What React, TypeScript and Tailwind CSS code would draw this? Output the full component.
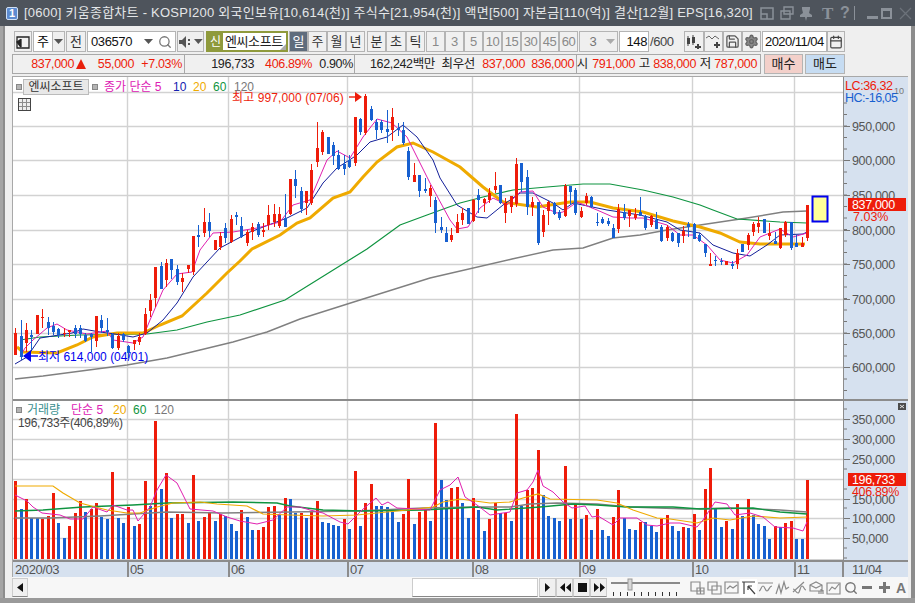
import { ReactNode } from "react";
import { Calendar, Save, Search, Settings } from "lucide-react";

const RED = "#ee1c0a";
const BLUE = "#1760d0";
const candleX = (i: number) => Math.round(15.3 + i * 5.385);

// top, bottom, high, low, colour (pixel coords, read off the screen)
const candles: [number, number, number, number, "r" | "b"][] = [
  [333,355,328,355,"r"],[336,357,320,360,"b"],[330,343,323,352,"r"],[335,337,330,350,"b"],[315,334,315,334,"r"],
  [317,318,309,328,"r"],[322,328,317,335,"b"],[326,332,322,335,"b"],[329,335,328,338,"b"],[333,334,328,337,"r"],
  [330,332,330,337,"r"],[328,334,325,338,"b"],[328,334,325,338,"b"],[335,341,333,342,"b"],[334,337,333,352,"b"],
  [316,341,316,347,"r"],[320,328,315,333,"b"],[330,332,318,336,"b"],[334,348,333,349,"b"],[336,348,333,350,"r"],
  [334,340,333,342,"b"],[346,353,345,358,"b"],[340,344,340,350,"r"],[337,342,333,345,"r"],[314,334,308,335,"r"],
  [300,311,294,317,"r"],[267,298,267,307,"r"],[266,289,262,289,"b"],[263,280,259,287,"r"],[259,270,259,279,"b"],
  [269,282,265,285,"b"],[278,282,273,292,"r"],[265,269,265,273,"r"],[236,272,236,275,"r"],[235,237,225,247,"b"],
  [222,233,208,237,"r"],[222,231,213,237,"b"],[240,250,240,250,"r"],[236,247,232,250,"r"],[228,238,223,243,"b"],
  [219,242,215,243,"r"],[215,217,212,225,"b"],[226,237,217,238,"b"],[232,243,230,246,"r"],[227,232,223,240,"r"],
  [224,235,222,237,"b"],[230,232,223,237,"r"],[215,225,205,230,"r"],[214,222,204,227,"r"],[214,226,207,228,"r"],
  [218,227,194,227,"b"],[179,214,179,215,"r"],[179,186,170,198,"b"],[191,209,187,213,"b"],[191,203,191,215,"r"],
  [170,203,164,205,"r"],[148,162,122,167,"r"],[132,152,130,155,"r"],[137,154,137,154,"b"],[145,156,142,165,"b"],
  [155,169,150,170,"b"],[164,169,155,175,"b"],[160,167,155,168,"b"],[117,163,117,166,"r"],[119,132,118,135,"b"],
  [96,133,94,135,"r"],[109,120,106,121,"b"],[122,130,119,139,"b"],[122,130,120,133,"b"],[129,132,110,143,"b"],
  [117,130,108,141,"r"],[128,130,123,136,"b"],[130,143,122,145,"b"],[151,177,147,180,"b"],[175,182,163,182,"r"],
  [175,191,175,197,"b"],[189,191,178,193,"b"],[188,196,185,207,"r"],[200,223,197,233,"b"],[227,230,217,233,"b"],
  [233,242,227,242,"b"],[235,240,228,242,"r"],[222,233,214,233,"r"],[213,220,208,225,"r"],[208,224,208,224,"b"],
  [200,221,199,222,"r"],[195,200,189,213,"b"],[199,203,198,212,"r"],[193,200,188,203,"r"],[186,190,172,193,"r"],
  [185,203,185,204,"b"],[203,213,198,223,"r"],[196,207,196,213,"r"],[164,204,158,207,"r"],[163,182,163,192,"b"],
  [177,207,170,215,"b"],[202,207,197,216,"r"],[202,243,202,245,"b"],[215,232,210,237,"r"],[202,211,201,225,"r"],
  [203,214,202,215,"b"],[212,218,210,220,"b"],[186,216,184,217,"r"],[186,192,186,205,"b"],[190,213,188,215,"b"],
  [211,217,207,218,"r"],[196,203,193,205,"r"],[197,207,196,208,"b"],[222,223,213,226,"b"],[219,223,217,224,"b"],
  [221,224,218,226,"b"],[228,238,224,238,"b"],[209,229,204,233,"r"],[212,218,204,220,"b"],[210,216,210,227,"r"],
  [214,218,208,220,"r"],[212,216,197,216,"b"],[216,228,215,230,"b"],[216,225,215,227,"r"],[220,229,212,229,"b"],
  [227,241,225,242,"b"],[227,238,225,241,"r"],[233,241,232,242,"b"],[233,243,233,247,"b"],[231,236,226,243,"r"],
  [224,227,222,237,"b"],[224,239,223,239,"b"],[235,241,233,242,"b"],[244,253,244,257,"b"],[264,266,253,266,"r"],
  [260,261,256,266,"b"],[261,262,258,265,"b"],[261,265,261,265,"r"],[264,266,261,269,"b"],[253,264,249,269,"r"],
  [244,252,244,252,"b"],[235,245,233,250,"r"],[224,232,222,236,"r"],[223,227,217,233,"r"],[219,233,219,233,"b"],
  [233,236,223,240,"r"],[241,244,232,244,"b"],[228,248,228,249,"r"],[222,235,221,237,"r"],[222,248,222,250,"b"],
  [243,247,235,247,"b"],[243,247,237,247,"r"],[205,238,205,241,"r"],
];

const volumes: [number, "r" | "b"][] = [
  [481,"r"],[509,"b"],[499,"r"],[518,"b"],[518,"b"],[519,"r"],[516,"r"],[493,"r"],[523,"b"],[538,"b"],
  [526,"r"],[513,"r"],[501,"r"],[512,"b"],[509,"r"],[503,"r"],[517,"b"],[519,"b"],[472,"r"],[518,"b"],
  [523,"b"],[507,"r"],[526,"b"],[524,"r"],[481,"r"],[506,"b"],[421,"r"],[489,"b"],[473,"r"],[518,"b"],
  [514,"r"],[514,"r"],[523,"b"],[475,"r"],[521,"b"],[517,"r"],[513,"r"],[521,"b"],[514,"r"],[516,"b"],
  [524,"b"],[531,"b"],[510,"r"],[517,"b"],[530,"b"],[530,"r"],[527,"r"],[507,"r"],[506,"r"],[515,"b"],
  [498,"r"],[499,"b"],[513,"b"],[513,"r"],[518,"b"],[512,"r"],[501,"r"],[522,"b"],[523,"b"],[525,"b"],
  [526,"b"],[519,"r"],[529,"b"],[471,"r"],[526,"b"],[503,"r"],[484,"r"],[506,"b"],[506,"b"],[507,"b"],
  [512,"b"],[522,"b"],[514,"r"],[479,"r"],[524,"b"],[512,"r"],[510,"r"],[521,"b"],[423,"r"],[480,"b"],
  [500,"b"],[488,"r"],[487,"r"],[503,"b"],[518,"b"],[498,"r"],[510,"b"],[531,"b"],[519,"r"],[503,"r"],
  [513,"b"],[513,"r"],[521,"b"],[414,"r"],[506,"b"],[490,"r"],[488,"r"],[450,"r"],[495,"b"],[516,"b"],
  [518,"b"],[521,"b"],[466,"r"],[519,"b"],[505,"r"],[519,"b"],[515,"r"],[530,"b"],[509,"r"],[530,"b"],
  [536,"b"],[517,"r"],[490,"r"],[518,"b"],[529,"b"],[530,"b"],[522,"r"],[522,"b"],[526,"b"],[532,"b"],
  [519,"r"],[515,"r"],[526,"b"],[531,"b"],[527,"r"],[528,"b"],[514,"r"],[530,"b"],[489,"r"],[468,"r"],
  [509,"b"],[527,"b"],[521,"r"],[529,"b"],[504,"r"],[516,"b"],[499,"r"],[515,"b"],[524,"b"],[526,"b"],
  [539,"b"],[526,"r"],[527,"b"],[523,"r"],[521,"r"],[539,"b"],[539,"b"],[480,"r"],
];

const ma5 = "20,357 25,348 33,340 47,328 57,324 67,330 87,334 107,331 113,340 133,343 143,337 150,320 163,290 177,274 192,272 200,250 213,233 233,232 257,228 280,222 293,205 310,200 327,160 337,151 350,158 363,137 377,119 392,123 407,137 430,183 450,220 457,229 468,227 480,208 493,198 507,205 520,192 533,191 543,207 557,213 563,212 577,202 597,210 613,217 630,218 643,218 667,225 680,235 693,235 707,245 720,260 733,263 747,255 760,237 780,229 793,237 807,233";
const ma10 = "15,364 27,357 40,338 72,333 83,329 100,332 115,334 133,337 147,333 163,320 177,303 193,277 220,248 250,232 287,218 307,208 323,183 337,168 357,155 370,142 387,137 403,125 417,137 433,160 440,178 457,205 477,217 487,218 503,205 520,193 533,193 553,203 563,210 573,203 607,210 640,215 667,222 680,230 700,233 713,245 733,253 750,256 767,245 780,235 803,234 807,232";
const ma20 = "17,347 23,352 57,353 77,345 93,337 117,333 143,333 160,325 182,316 207,293 227,273 240,261 252,249 280,235 297,223 310,218 333,198 350,192 363,177 377,162 397,147 413,143 433,152 460,167 483,187 503,202 537,207 570,202 590,202 613,208 643,212 673,221 700,227 720,233 740,242 760,244 805,244";
const ma60 = "20,340 40,337 80,335 147,334 177,330 207,322 240,315 285,300 330,272 367,249 400,225 427,215 460,203 483,197 513,190 547,187 583,184 610,184 643,190 673,197 700,205 713,210 737,219 780,222 807,223";
const ma120 = "15,379 43,376 127,365 167,358 200,350 233,342 267,332 300,319 360,300 430,278 512,259 553,250 583,248 613,238 640,235 667,230 700,225 747,218 783,212 807,211";

const vMa5 = "15,495 27,501 33,507 42,513 60,515 70,519 83,519 93,507 107,512 113,505 127,510 133,510 138,521 150,507 157,490 166,475 177,483 190,509 213,511 227,517 240,521 257,524 273,520 287,507 300,507 310,510 323,513 340,522 348,524 362,510 376,498 382,505 388,502 397,508 417,509 430,510 440,490 450,485 458,477 465,497 477,505 490,515 503,513 510,512 517,493 527,490 533,482 538,470 543,486 553,492 563,502 572,508 585,506 592,517 598,516 613,525 620,518 637,518 647,525 657,526 670,523 680,523 697,527 703,520 715,502 727,504 735,515 750,513 763,517 775,527 793,528 803,531 807,522";
const vMa20 = "15,486 53,486 63,493 80,503 107,510 127,513 140,513 157,507 173,503 200,502 217,504 247,506 263,514 290,515 323,516 357,515 407,510 433,507 443,502 460,499 490,503 510,502 523,498 538,494 550,499 597,500 617,503 633,510 657,518 670,519 697,523 713,518 730,520 753,516 780,518 807,517";
const vMa60 = "15,511 43,510 83,507 133,505 167,503 233,502 277,503 290,506 323,510 363,511 423,510 477,507 497,510 540,507 573,504 597,505 627,507 673,507 700,509 753,508 780,512 807,514";
const vMa120 = "15,518 50,518 100,516 133,514 167,512 223,513 290,512 357,511 423,508 473,507 510,507 530,504 557,503 597,504 630,507 687,509 730,508 780,510 807,512";

const verticals = [127, 228, 347, 472, 579, 692, 794];
const priceLines = [92, 126, 160, 195, 230, 264, 299, 333, 367];
const volumeLines = [419, 439, 459, 479, 499, 518, 538];

function Btn({ w, children, dim, active }: { w: number; children: ReactNode; dim?: boolean; active?: boolean }) {
  return (
    <div
      style={{ width: w }}
      className={`h-[21px] shrink-0 flex items-center justify-center border border-[#b4b4b4] text-[13px] ${
        active ? "bg-[#5f6c7c] text-white" : dim ? "bg-[#f0f0f0] text-[#8a8a8a]" : "bg-[#f0f0f0] text-[#333]"
      }`}
    >
      {children}
    </div>
  );
}

function Caret({ color = "#555" }: { color?: string }) {
  return (
    <svg width="9" height="5" viewBox="0 0 9 5">
      <path d="M0 0h9L4.5 5z" fill={color} />
    </svg>
  );
}

function TitleIcons() {
  return (
    <div className="flex items-center ml-auto pr-[3px] text-[#8b9199]">
      <svg width="14" height="14" viewBox="0 0 14 14" fill="none" stroke="currentColor" strokeWidth="1.5" className="mr-[6px]">
        <path d="M1 2h12v11H1zM1 8h6v5" />
      </svg>
      <svg width="14" height="14" viewBox="0 0 14 14" fill="none" stroke="currentColor" strokeWidth="1.4" className="mr-[5px]">
        <path d="M4 1h9v7H4zM1 5h9v8H1z" />
      </svg>
      <svg width="14" height="15" viewBox="0 0 14 15" fill="currentColor" className="mr-[9px]">
        <path d="M3 1h8v2L10 7l3 2v2H8l-1 4-1-4H1V9l3-2L3 3z" />
      </svg>
      <span className="w-[13px] font-['Liberation_Serif',serif] font-bold text-[17px] leading-none mr-[5px]">T</span>
      <span className="w-[11px] font-bold text-[16px] leading-none mr-[3px]">?</span>
      <div className="w-px h-[14px] bg-[#8b9199] mr-[12px]" />
      <div className="w-[11px] h-[3px] bg-[#8b9199] mt-[9px] mr-[3px]" />
      <div className="w-[11px] h-[11px] border-2 border-t-[3px] border-[#8b9199] mr-[7px]" />
      <svg width="13" height="13" viewBox="0 0 13 13" stroke="#6c727a" strokeWidth="1.3">
        <path d="M1 1l11 11M12 1L1 12" />
      </svg>
    </div>
  );
}

function ToolbarOne() {
  return (
    <div className="h-[28px] flex items-center pl-[2px] pt-[3px]">
      <Btn w={18}>
        <svg width="14" height="14" viewBox="0 0 14 14" fill="none" stroke="#222" strokeWidth="1.3">
          <path d="M1 2h12v11H1z" />
          <path d="M5 4v8M1 7l3-2v6z" fill="#222" />
        </svg>
      </Btn>
      <div className="flex ml-px">
        <div className="w-[20px] h-[21px] bg-white border border-[#b4b4b4] flex items-center justify-center text-[13px]">주</div>
        <div className="w-[12px] h-[21px] border border-l-0 border-[#b4b4b4] flex items-center justify-center"><Caret /></div>
      </div>
      <div className="ml-[1px]"><Btn w={20}>전</Btn></div>
      <div className="ml-px flex w-[89px] h-[21px] border border-[#b4b4b4] bg-white items-center">
        <span className="w-[53px] pl-[3px] text-[13px] text-[#111] tracking-[-0.4px]">036570</span>
        <div className="w-[14px] flex justify-center"><Caret /></div>
        <div className="w-[20px] flex justify-center"><Search size={14} color="#777" strokeWidth={2.2} /></div>
      </div>
      <div className="ml-px flex items-center w-[27px] h-[21px] border border-[#b4b4b4]">
        <div className="w-[17px] flex justify-center">
          <svg width="14" height="12" viewBox="0 0 14 12" fill="#555">
            <path d="M0 4h3l4-4v12L3 8H0z" />
            <rect x="9" y="3" width="2" height="2" />
            <rect x="9" y="7" width="2" height="2" />
          </svg>
        </div>
        <Caret />
      </div>
      <div className="ml-[2px] w-[82px] h-[21px] border-2 border-[#8f9a3c] bg-white flex items-center relative">
        <span className="w-[15px] h-full bg-[#8f9a3c] text-white text-[12px] flex items-center justify-center">신</span>
        <span className="pl-[2px] text-[13px] text-[#222] whitespace-nowrap tracking-[-0.4px]">엔씨소프트</span>
        <div className="absolute right-0 bottom-0 w-0 h-0 border-l-[6px] border-l-transparent border-b-[6px] border-b-[#aaa]" />
      </div>
      <div className="flex ml-px">
        <Btn w={19} active>일</Btn>
        <Btn w={19}>주</Btn>
        <Btn w={19}>월</Btn>
        <Btn w={19}>년</Btn>
      </div>
      <div className="flex ml-[2px]">
        <Btn w={19}>분</Btn>
        <Btn w={20}>초</Btn>
        <Btn w={19}>틱</Btn>
      </div>
      <div className="flex ml-[1px] tracking-[-0.4px]">
        {["1", "3", "5", "10", "15", "30", "45", "60"].map((n) => (
          <Btn key={n} w={19} dim>{n}</Btn>
        ))}
      </div>
      <div className="ml-px flex w-[39px] h-[21px] border border-[#b4b4b4] text-[13px] text-[#777] items-center">
        <span className="w-[26px] text-center">3</span>
        <Caret color="#aaa" />
      </div>
      <div className="ml-px w-[30px] h-[21px] border border-[#b4b4b4] bg-white text-right pr-px text-[13px] leading-[19px] text-[#111] tracking-[-0.4px]">148</div>
      <span className="ml-px w-[34px] text-[13px] text-[#444] tracking-[-0.4px]">/600</span>
      <Btn w={20}>
        <svg width="16" height="14" viewBox="0 0 16 14" fill="#444">
          <rect x="1" y="3" width="3" height="6" /><rect x="6" y="2" width="3" height="6" />
          <path d="M2 1v10M7 0v10" stroke="#444" />
          <path d="M11 9h2v2h2v2h-2v1h-2v-1H9v-2h2z" />
        </svg>
      </Btn>
      <Btn w={19}>
        <svg width="16" height="14" viewBox="0 0 16 14" fill="none" stroke="#666">
          <path d="M0 3l3-2 3 3 3-3 4 3" />
          <path d="M11 7v6M8 10h6" strokeWidth="2" stroke="#444" />
        </svg>
      </Btn>
      <Btn w={19}><Save size={15} color="#555" strokeWidth={2} /></Btn>
      <Btn w={19}><Settings size={15} color="#666" fill="#888" strokeWidth={2.2} /></Btn>
      <div className="ml-px w-[65px] h-[21px] border border-[#b4b4b4] bg-white text-[13px] leading-[19px] text-[#111] pl-[2px] tracking-[-0.55px] whitespace-nowrap">2020/11/04</div>
      <Btn w={18}><Calendar size={14} color="#444" /></Btn>
    </div>
  );
}

function Cell({ right, color = "#222", children }: { right: number; color?: string; children: ReactNode }) {
  // right-aligned to a fixed x inside its box, as the quote strip lines its numbers up
  return (
    <span className="absolute top-0 text-[12.5px] leading-[18px] whitespace-nowrap tracking-[-0.35px]" style={{ right, color }}>
      {children}
    </span>
  );
}

function ToolbarTwo() {
  return (
    <div className="h-[22px] flex items-stretch text-[13px]">
      <div className="relative w-[173px] h-[20px] border border-[#a8a8a8] bg-[#f0f0f0]">
        <Cell right={110} color={RED}>837,000</Cell>
        <span className="absolute left-[63px] top-[4px] w-0 h-0 border-x-[5px] border-x-transparent border-b-[10px] border-b-[#e8200c]" />
        <Cell right={50} color={RED}>55,000</Cell>
        <Cell right={2} color={RED}>+7.03%</Cell>
      </div>
      <div className="relative w-[170px] h-[20px] border border-l-0 border-[#a8a8a8] bg-[#f0f0f0]">
        <Cell right={100}>196,733</Cell>
        <Cell right={42} color={RED}>406.89%</Cell>
        <Cell right={1}>0.90%</Cell>
      </div>
      <div className="relative w-[222px] h-[20px] border border-l-0 border-[#a8a8a8] bg-[#f0f0f0]">
        <Cell right={141}>162,242백만</Cell>
        <Cell right={101}>최우선</Cell>
        <Cell right={51} color={RED}>837,000</Cell>
        <Cell right={2} color={RED}>836,000</Cell>
      </div>
      <div className="relative w-[184px] h-[20px] border border-l-0 border-[#a8a8a8] bg-[#f0f0f0]">
        <Cell right={172}>시</Cell>
        <Cell right={125} color={RED}>791,000</Cell>
        <Cell right={110}>고</Cell>
        <Cell right={64} color={RED}>838,000</Cell>
        <Cell right={49}>저</Cell>
        <Cell right={3} color={RED}>787,000</Cell>
      </div>
      <div className="ml-[3px] w-[39px] h-[20px] border border-[#b4b4b4] bg-[#f3d0ca] text-center leading-[18px] text-[#222]">매수</div>
      <div className="ml-[2px] w-[40px] h-[20px] border border-[#b4b4b4] bg-[#c6dcf2] text-center leading-[18px] text-[#222]">매도</div>
    </div>
  );
}

function GridV({ y1, y2 }: { y1: number; y2: number }) {
  return (
    <>
      {verticals.map((x) => (
        <line key={x} x1={x + 0.5} x2={x + 0.5} y1={y1} y2={y2} stroke="#d2d2d2" strokeWidth="1.4" />
      ))}
    </>
  );
}

function PricePlot() {
  return (
    <svg width="830" height="322" viewBox="13 77 830 322" className="absolute inset-0">
      {priceLines.map((y) => (
        <line key={y} x1="13" x2="843" y1={y + 0.5} y2={y + 0.5} stroke="#d2d2d2" strokeWidth="1.4" />
      ))}
      <GridV y1={77} y2={399} />
      <polyline points={ma120} fill="none" stroke="#808080" strokeWidth="1.4" />
      <polyline points={ma60} fill="none" stroke="#0f9440" strokeWidth="1.2" />
      <polyline points={ma20} fill="none" stroke="#efaa00" strokeWidth="3" />
      <polyline points={ma10} fill="none" stroke="#14209a" strokeWidth="1" />
      <polyline points={ma5} fill="none" stroke="#e020b0" strokeWidth="1" />
      {candles.map(([top, bottom, high, low, c], i) => {
        const x = candleX(i);
        const fill = c === "r" ? RED : BLUE;
        return (
          <g key={i} fill={fill} shapeRendering="crispEdges">
            <rect x={x} y={high} width="1" height={Math.max(low - high, 1)} />
            <rect x={x - 1} y={top} width="3" height={Math.max(bottom - top, 1)} />
          </g>
        );
      })}
      <rect x="812.5" y="196.5" width="15" height="25" fill="#ffff99" stroke="#0000ee" strokeWidth="2" />
      <path d="M349 97h6" stroke={RED} strokeWidth="1.4" />
      <path d="M355 92l7 5-7 5z" fill={RED} />
      <path d="M30 356h8" stroke="#0000ee" strokeWidth="1.4" />
      <path d="M31 350l-8 6 8 6z" fill="#0000ee" />
    </svg>
  );
}

function PriceAxis() {
  const labels: [string, number][] = [
    ["950,000", 126], ["900,000", 160], ["850,000", 195], ["800,000", 230],
    ["750,000", 264], ["700,000", 299], ["650,000", 333], ["600,000", 367],
  ];
  const minor = Array.from({ length: 28 }, (_, i) => 103 + i * 11.5);
  return (
    <svg width="64" height="322" viewBox="843 77 64 322" className="absolute inset-0">
      {minor.map((y) => <line key={y} x1="843" x2="846" y1={y} y2={y} stroke="#777" />)}
      {labels.map(([t, y]) => (
        <g key={t}>
          <line x1="843" x2="849" y1={y + 0.5} y2={y + 0.5} stroke="#777" />
          <text x="851" y={y + 5} fontSize="12.5" fill="#555" letterSpacing="-0.35">{t}</text>
        </g>
      ))}
      <text x="844" y="90" fontSize="12.5" fill="#ee1c0a" letterSpacing="-0.4">LC:36,32</text>
      <text x="893" y="94" fontSize="9" fill="#777">10</text>
      <text x="844" y="102" fontSize="12.5" fill="#1760d0" letterSpacing="-0.5">HC:-16,05</text>
      <rect x="847" y="198" width="58" height="13" fill={RED} />
      <text x="851" y="209" fontSize="12.5" fill="#fff" letterSpacing="-0.35">837,000</text>
      <text x="852" y="221" fontSize="12.5" fill={RED}>7.03%</text>
    </svg>
  );
}

function VolumePlot() {
  return (
    <svg width="830" height="159" viewBox="13 401 830 159" className="absolute inset-0">
      {volumeLines.map((y) => (
        <line key={y} x1="13" x2="843" y1={y + 0.5} y2={y + 0.5} stroke="#d2d2d2" strokeWidth="1.4" />
      ))}
      <line x1="13" x2="843" y1="559.5" y2="559.5" stroke="#d2d2d2" />
      <GridV y1={401} y2={560} />
      {volumes.map(([top, c], i) => (
        <rect key={i} x={candleX(i) - 1} y={top} width="3" height={559 - top} fill={c === "r" ? RED : BLUE} shapeRendering="crispEdges" />
      ))}
      <polyline points={vMa120} fill="none" stroke="#808080" strokeWidth="1.4" />
      <polyline points={vMa60} fill="none" stroke="#0f9440" strokeWidth="1.4" />
      <polyline points={vMa20} fill="none" stroke="#efaa00" strokeWidth="1.2" />
      <polyline points={vMa5} fill="none" stroke="#e020b0" strokeWidth="1" />
    </svg>
  );
}

function VolumeAxis() {
  const labels: [string, number][] = [
    ["350,000", 419], ["300,000", 439], ["250,000", 459], ["150,000", 499], ["100,000", 518], ["50,000", 538],
  ];
  const minor = [409, 429, 449, 469, 489, 508, 528, 548, 558];
  return (
    <svg width="64" height="159" viewBox="843 401 64 159" className="absolute inset-0">
      {minor.map((y) => <line key={y} x1="843" x2="846" y1={y} y2={y} stroke="#777" />)}
      {labels.map(([t, y]) => (
        <g key={t}>
          <line x1="843" x2="849" y1={y + 0.5} y2={y + 0.5} stroke="#777" />
          <text x="851" y={y + 5} fontSize="12.5" fill="#555" letterSpacing="-0.35">{t}</text>
        </g>
      ))}
      <rect x="847" y="473" width="58" height="13" fill={RED} />
      <text x="851" y="484" fontSize="12.5" fill="#fff" letterSpacing="-0.35">196,733</text>
      <text x="851" y="496" fontSize="12.5" fill={RED} letterSpacing="-0.35">406.89%</text>
      <rect x="897" y="403" width="8" height="7" fill="#4c4c4c" />
      <path d="M899 405l4 3M903 405l-4 3" stroke="#fff" strokeWidth="0.8" />
    </svg>
  );
}

function XAxis() {
  const ticks: [string, number][] = [
    ["05", 101], ["06", 119], ["07", 125], ["08", 107], ["09", 113], ["10", 102], ["11", 48],
  ];
  return (
    <div className="h-[17px] shrink-0 flex bg-[#d6e1ef] border-t-2 border-[#8c8c8c] text-[13px] text-[#555] leading-[16px]">
      <div className="w-[114px] pl-[2px] tracking-[-0.4px]">2020/03</div>
      {ticks.map(([t, w]) => (
        <div key={t} style={{ width: w }} className="border-l-2 border-[#8c8c8c] pl-[1px] tracking-[-0.4px]">{t}</div>
      ))}
      <div className="flex-1 border-l-2 border-[#8c8c8c] pl-[8px] tracking-[-0.4px]">11/04</div>
    </div>
  );
}

function SmallIcon({ d, active }: { d: string; active?: boolean }) {
  return (
    <div className={`w-[17px] h-[18px] flex items-center justify-center ${active ? "bg-white" : ""}`}>
      <svg width="15" height="15" viewBox="0 0 15 15" fill="none" stroke={active ? "#444" : "#8a8a8a"} strokeWidth="1.2">
        <path d={d} />
      </svg>
    </div>
  );
}

function BottomBar() {
  return (
    <div className="h-[21px] shrink-0 flex items-center bg-[#f7f7f7] text-[#111]">
      <div className="w-[16px] h-[19px] bg-[#f0f0f0] border border-[#ccc] border-b-[#888] flex items-center justify-center">
        <svg width="6" height="9" viewBox="0 0 6 9"><path d="M6 0v9L0 4.5z" fill="#111" /></svg>
      </div>
      <div className="w-[384px]" />
      <div className="w-[126px] h-[19px] bg-white border border-[#ccc] border-b-[#888]" />
      <div className="flex ml-px">
        {[
          "M3 0v9l5-4.5z",
          "M6 0v9L1 4.5zM12 0v9L7 4.5z",
          "M2 0h9v9H2z",
          "M1 0v9l5-4.5zM7 0v9l5-4.5z",
        ].map((d) => (
          <div key={d} className="w-[17px] h-[19px] bg-[#f0f0f0] border border-[#ccc] border-b-[#888] flex items-center justify-center">
            <svg width="12" height="9" viewBox="0 0 12 9"><path d={d} fill="#111" /></svg>
          </div>
        ))}
      </div>
      <svg width="72" height="19" viewBox="0 0 72 19" className="ml-[4px] shrink-0">
        <rect x="0" y="4" width="69" height="2" fill="#8a8a8a" />
        <rect x="17" y="1" width="4" height="11" fill="#d8d8d8" stroke="#999" />
        {[0, 7, 14, 21, 28, 35, 42, 49, 56, 63].map((x) => (
          <rect key={x} x={x + 2} y="14" width="1" height="4" fill="#333" />
        ))}
      </svg>
      <div className="ml-[6px] flex items-center">
        <SmallIcon d="M1 2h9v9H1zM7 8h7v6H7zM10.500 8v6M7 11h7" />
        <SmallIcon d="M1 2h9v8H1zM5 6h9v8H5z" />
        <SmallIcon d="M1 2h13v11H1zM3 9l3-3 3 2 4-3" />
        <SmallIcon active d="M1 2h13M3 14V2M7 6l7 8M7 6v4M7 6h4" />
        <SmallIcon d="M0 3h15M1 11c2 0 2-5 4-5s2 5 4 5 2-5 5-5" />
        <SmallIcon d="M1 14l3-9 2 8 3-11 2 7 3-2" />
        <SmallIcon d="M1 12L12 2M1 9c2 0 3 4 5 4s2-7 4-7 2 4 4 4" />
        <SmallIcon d="M1 5l6-3 6 3v6H1zM1 5l6 3 6-3M10 11v3M12 9v5M14 10v4" />
        <SmallIcon d="M1 14V3h13v11zM3 11l3-4 3 2 4-5" />
        <div className="ml-[1px] w-[15px] flex justify-center"><Search size={14} color="#777" strokeWidth={2.4} /></div>
        <div className="ml-[4px] w-[10px] h-[3px] bg-[#777]" />
        <div className="ml-[7px] w-[11px] h-[11px] relative">
          <div className="absolute left-0 right-0 top-[4px] h-[3px] bg-[#777]" />
          <div className="absolute top-0 bottom-0 left-[4px] w-[3px] bg-[#777]" />
        </div>
        <span className="ml-[6px] font-bold text-[14px] text-[#777] leading-none">A</span>
      </div>
    </div>
  );
}

export default function App() {
  return (
    <div className="w-[915px] h-[603px] overflow-hidden flex flex-col bg-[#efefef] text-[13px] font-['Liberation_Sans','Noto_Sans_CJK_KR',sans-serif]">
      <div className="h-[26px] shrink-0 flex items-center bg-[#4e545c] pl-[6px]">
        <div className="w-[12px] h-[13px] rounded-[2px] bg-[#5d8bd0] border border-[#cfe0f5] text-white text-[11px] font-bold leading-[11px] text-center">1</div>
        <span className="ml-[6px] text-[13px] text-[#e4e6e8] whitespace-nowrap tracking-[0.25px]">
          [0600] 키움종합차트 - KOSPI200 외국인보유[10,614(천)] 주식수[21,954(천)] 액면[500] 자본금[110(억)] 결산[12월] EPS[16,320]
        </span>
        <TitleIcons />
      </div>

      <div className="flex-1 flex min-h-0">
        <div className="w-[12px] flex shrink-0">
          <div className="w-[3px] bg-[#a4a4a4]" />
          <div className="w-[2px] bg-[#8c8c8c]" />
          <div className="flex-1 bg-[#efefef]" />
        </div>

        <div className="w-[896px] flex flex-col">
          <ToolbarOne />
          <ToolbarTwo />
          <div className="flex-1 flex flex-col bg-white border-l border-t border-[#a8a8a8] min-h-0">
            <div className="h-[322px] flex shrink-0">
              <div className="w-[830px] relative overflow-hidden">
                <PricePlot />
                <div className="absolute left-[3px] top-[1px] flex items-center text-[12px] whitespace-nowrap">
                  <span className="w-[6px] h-[6px] bg-[#b4b4b4] border border-[#888]" />
                  <span className="ml-[1px] w-[66px] h-[16px] bg-[#e8e8e8] border border-[#bbb] text-center text-[#333] leading-[14px]">엔씨소프트</span>
                  <span className="ml-[3px] w-[6px] h-[6px] bg-[#b4b4b4] border border-[#888]" />
                  <span className="ml-[6px] w-[69px] text-[#dd20b4]">종가 단순 5</span>
                  <span className="w-[20px] text-[#1420b0]">10</span>
                  <span className="w-[20px] text-[#efaa00]">20</span>
                  <span className="w-[21px] text-[#0f9440]">60</span>
                  <span className="text-[#777]">120</span>
                </div>
                <div className="absolute left-[5px] top-[21px] w-[13px] h-[13px] border border-[#444] bg-[#8c8c8c] grid grid-cols-3 gap-px">
                  {Array.from({ length: 9 }, (_, i) => <span key={i} className="bg-[#eee]" />)}
                </div>
                <span className="absolute left-[219px] top-[12px] text-[12px] text-[#ee1c0a] whitespace-nowrap tracking-[0.1px]">최고 997,000 (07/06)</span>
                <span className="absolute left-[25px] top-[271px] text-[12px] text-[#0000ee] whitespace-nowrap">최저 614,000 (04/01)</span>
              </div>
              <div className="relative flex-1 bg-[#d6e1ef] border-l border-[#8c8c8c]"><PriceAxis /></div>
            </div>
            <div className="h-[161px] flex shrink-0 border-t-2 border-[#8c8c8c]">
              <div className="w-[830px] relative overflow-hidden">
                <VolumePlot />
                <div className="absolute left-[3px] top-0 flex items-center text-[12px] whitespace-nowrap">
                  <span className="w-[6px] h-[6px] bg-[#b4b4b4] border border-[#888]" />
                  <span className="ml-[5px] w-[44px] text-[#3a8f8f]">거래량</span>
                  <span className="w-[42px] text-[#dd20b4]">단순 5</span>
                  <span className="w-[20px] text-[#efaa00]">20</span>
                  <span className="w-[21px] text-[#0f9440]">60</span>
                  <span className="text-[#777]">120</span>
                </div>
                <span className="absolute left-[5px] top-[13px] text-[12px] text-[#444] whitespace-nowrap tracking-[-0.3px]">196,733주(406,89%)</span>
              </div>
              <div className="relative flex-1 bg-[#d6e1ef] border-l border-[#8c8c8c]"><VolumeAxis /></div>
            </div>
            <XAxis />
          </div>
          <BottomBar />
        </div>

        <div className="w-[7px] flex shrink-0">
          <div className="w-[3px] bg-[#efefef]" />
          <div className="flex-1 bg-[#8c8c8c]" />
        </div>
      </div>
      <div className="h-[5px] shrink-0 bg-[#9a9a9a]" />
    </div>
  );
}
